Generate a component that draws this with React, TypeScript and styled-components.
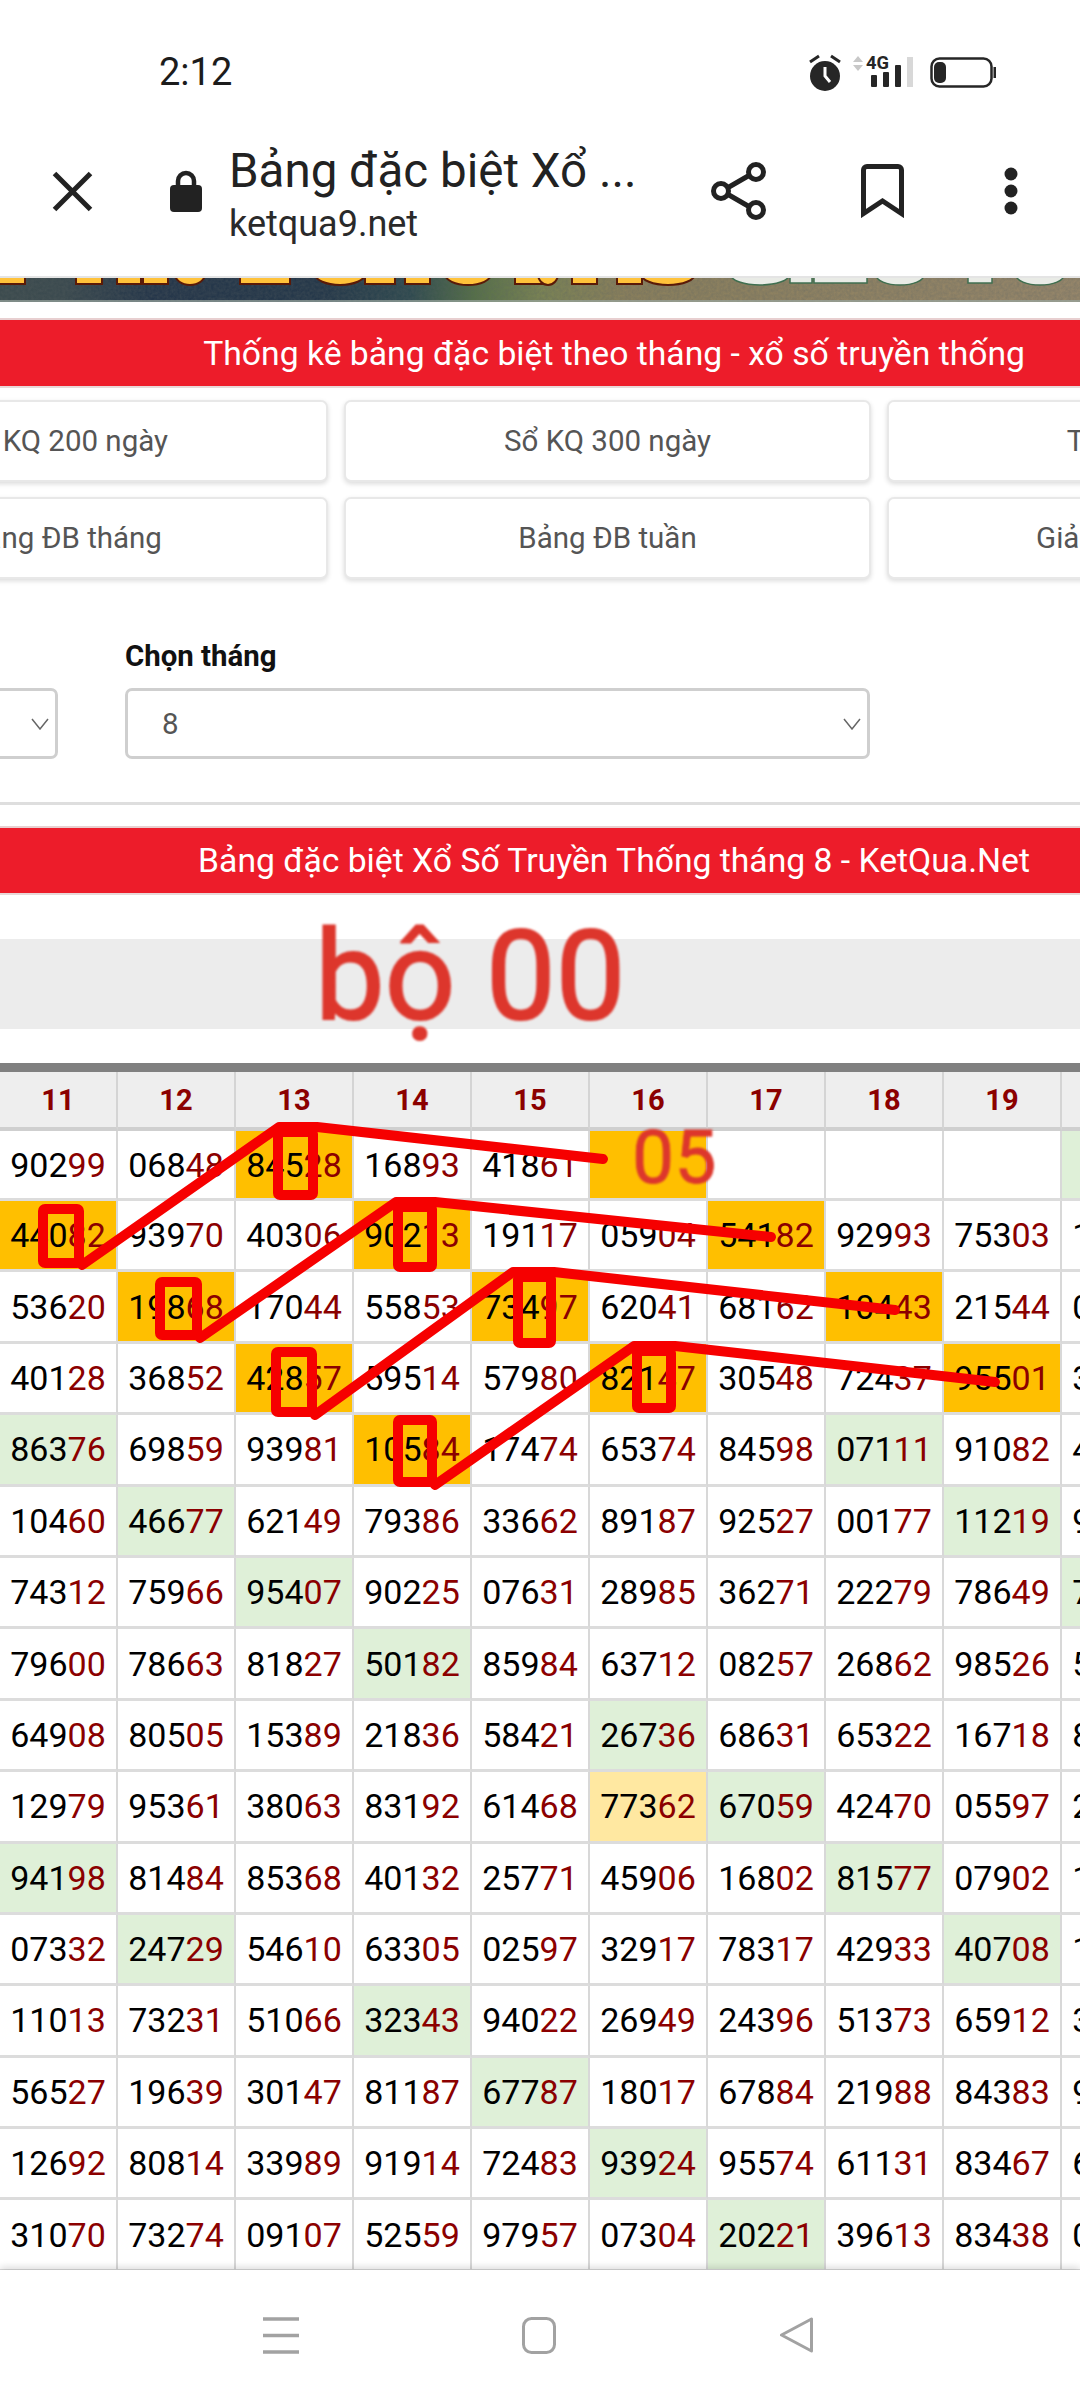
import React from "react";
import styled, { createGlobalStyle } from "styled-components";

const Global = createGlobalStyle`
  html, body { margin: 0; padding: 0; background: #fff; }
  * { box-sizing: border-box; }
`;

const Screen = styled.div`
  position: relative;
  width: 1080px;
  height: 2400px;
  overflow: hidden;
  display: flex;
  flex-direction: column;
  background: #fff;
  font-family: Roboto, "Noto Sans", sans-serif;
`;

const StatusBar = styled.div`
  height: 106px;
  flex: none;
  display: flex;
  justify-content: space-between;
  align-items: flex-start;
  padding: 50px 80px 0 159px;
`;
const Time = styled.div`
  font-size: 38px;
  line-height: 44px;
  color: #1c1c1c;
`;
const Toolbar = styled.div`
  height: 170px;
  flex: none;
  display: flex;
  align-items: center;
  padding-left: 52px;
`;
const IconSlot = styled.div<{ $left: number }>`
  display: flex;
  flex: none;
  margin-left: ${(p) => p.$left}px;
`;
const TitleBlock = styled.div`
  width: 440px;
  margin-left: 27px;
  flex: none;
  display: flex;
  flex-direction: column;
  gap: 8px;
  margin-top: 6px;
`;
const PageTitle = styled.div`
  font-size: 47.5px;
  line-height: 52px;
  color: #222;
  white-space: nowrap;
`;
const PageUrl = styled.div`
  font-size: 36px;
  line-height: 38px;
  color: #2a2a2a;
`;
const Main = styled.div`
  flex: 1;
  min-height: 0;
  overflow: hidden;
`;
const BannerStrip = styled.div`
  height: 26px;
  border-top: 2px solid #e4e4e4;
  svg { display: block; }
`;
const RedBar = styled.div<{ $top: number; $height: number; $right: number }>`
  margin-top: ${(p) => p.$top}px;
  height: ${(p) => p.$height}px;
  background: #ed1c2a;
  border-top: 2px solid #e8cfd0;
  border-bottom: 2px solid #e8d8d8;
  display: flex;
  align-items: center;
  justify-content: flex-end;
  padding-right: ${(p) => p.$right}px;
  color: #fff;
  font-size: 33.7px;
  white-space: nowrap;
`;
const ButtonGrid = styled.div`
  margin: 12px 0 0 -199px;
  display: grid;
  grid-template-columns: repeat(3, 527px);
  grid-auto-rows: 82px;
  column-gap: 16px;
  row-gap: 15px;
`;
const LinkButton = styled.div`
  border: 2px solid #e8e8e8;
  border-radius: 7px;
  background: #fff;
  box-shadow: 0 2px 5px rgba(0, 0, 0, 0.14);
  display: flex;
  align-items: center;
  justify-content: center;
  font-size: 29.5px;
  color: #555;
  white-space: nowrap;
`;
const FilterGrid = styled.div`
  margin: 60px 0 0 -687px;
  display: grid;
  grid-template-columns: 745px 745px;
  column-gap: 67px;
`;
const FilterField = styled.div`
  display: flex;
  flex-direction: column;
`;
const FilterLabel = styled.div`
  font-size: 29.4px;
  font-weight: 700;
  line-height: 34px;
  height: 34px;
  margin-bottom: 15px;
  color: #111;
`;
const SelectBox = styled.div`
  height: 71px;
  border: 3px solid #cfcfcf;
  border-radius: 7px;
  display: flex;
  align-items: center;
  justify-content: space-between;
  padding: 0 6px 0 34px;
  font-size: 29.5px;
  color: #555;
`;
const Divider = styled.div`
  margin-top: 43px;
  height: 3px;
  background: #dedede;
`;
const GreyBand = styled.div`
  margin-top: 44px;
  height: 90px;
  background: #ececec;
`;
const Table = styled.div`
  margin: 34px 0 0 0;
  width: 1180px;
  border-top: 9px solid #808080;
`;
const Row = styled.div<{ $height: number }>`
  display: grid;
  grid-template-columns: repeat(10, 118px);
  height: ${(p) => p.$height}px;
`;
const HeadCell = styled.div`
  background: #eee;
  border-right: 2px solid #d4d4d4;
  border-bottom: 4px solid #cfcfcf;
  display: flex;
  align-items: center;
  justify-content: center;
  color: #8b0000;
  font-size: 29px;
  font-weight: 700;
`;
const cellBg: Record<string, string> = { o: "#ffbf00", g: "#dff0d8", y: "#ffe8a1", "": "#fff" };
const Cell = styled.div<{ $tone: string }>`
  background: ${(p) => cellBg[p.$tone]};
  border-right: 2px solid #d8d8d8;
  border-bottom: 3px solid #dcdcdc;
  display: flex;
  align-items: center;
  justify-content: center;
  font-size: 34px;
  color: #000;
`;
const Tail = styled.span`
  color: #8b0000;
`;
const Annotations = styled.svg`
  position: absolute;
  left: 0;
  top: 0;
  pointer-events: none;
`;
const HandText = styled.div<{ $x: number; $y: number; $size: number; $stroke: number }>`
  position: absolute;
  left: ${(p) => p.$x}px;
  top: ${(p) => p.$y}px;
  font-size: ${(p) => p.$size}px;
  line-height: 1;
  color: #dd362c;
  -webkit-text-stroke: ${(p) => p.$stroke}px #dd362c;
  filter: blur(0.8px);
  white-space: nowrap;
`;
const BottomNav = styled.div`
  position: relative;
  height: 130px;
  flex: none;
  background: #fff;
  box-shadow: 0 -3px 7px rgba(0, 0, 0, 0.14);
  display: flex;
  align-items: center;
  padding-left: 263px;
  gap: 223px;
`;

const raw = `90299 06848 84528:o 16893 41861 :o : : : :g
44082:o 93970 40306 90213:o 19117 05904 54182:o 92993 75303 10525
53620 19868:o 17044 55853 73497:o 62041 68162 10443:o 21544 03318
40128 36852 42857:o 59514 57980 82147:o 30548 72437 95501:o 38214
86376:g 69859 93981 10584:o 17474 65374 84598 07111:g 91082 49120
10460 46677:g 62149 79386 33662 89187 92527 00177 11219:g 95240
74312 75966 95407:g 90225 07631 28985 36271 22279 78649 70312:g
79600 78663 81827 50182:g 85984 63712 08257 26862 98526 54216
64908 80505 15389 21836 58421 26736:g 68631 65322 16718 80451
12979 95361 38063 83192 61468 77362:y 67059:g 42470 05597 25173
94198:g 81484 85368 40132 25771 45906 16802 81577:g 07902 16340
07332 24729:g 54610 63305 02597 32917 78317 42933 40708:g 12986
11013 73231 51066 32343:g 94022 26949 24396 51373 65912 30745
56527 19639 30147 81187 67787:g 18017 67884 21988 84383 92861
12692 80814 33989 91914 72483 93924:g 95574 61131 83467 60528
31070 73274 09107 52559 97957 07304 20221:g 39613 83438 04692`;
const rows = raw.split("\n").map((line) =>
  line.split(" ").map((c) => {
    const [num, tone = ""] = c.split(":");
    return { num, tone };
  })
);
const days = ["11", "12", "13", "14", "15", "16", "17", "18", "19", "20"];

const buttons = [
  "Sổ KQ 200 ngày",
  "Sổ KQ 300 ngày",
  "Tìm kiếm KQ",
  "Bảng ĐB tháng",
  "Bảng ĐB tuần",
  "Giải đặc biệt năm",
];

const StatusIcons = () => (
  <svg width="195" height="45" viewBox="805 50 195 45">
    <circle cx="825" cy="76" r="15" fill="#262626" />
    <path d="M825 67v9l5 6" stroke="#fff" strokeWidth="3" fill="none" />
    <path d="M810 62l9-6M840 62l-9-6" stroke="#262626" strokeWidth="3" fill="none" />
    <path d="M858 56l5 6h-10zM858 71l5-6h-10z" fill="#c8c8c8" />
    <text x="866" y="69" fontFamily="Roboto, sans-serif" fontWeight="700" fontSize="19" fill="#262626" textLength="23" lengthAdjust="spacingAndGlyphs">4G</text>
    <rect x="871" y="75" width="6" height="12" rx="1" fill="#262626" />
    <rect x="883" y="72" width="6" height="15" rx="1" fill="#262626" />
    <rect x="895" y="65" width="6" height="22" rx="1" fill="#262626" />
    <rect x="907" y="57" width="6" height="30" fill="#d8d8d8" />
    <rect x="931.5" y="58.5" width="60" height="28" rx="8" fill="none" stroke="#262626" strokeWidth="2.5" />
    <rect x="934" y="62" width="12" height="21" rx="5" fill="#262626" />
    <rect x="993.5" y="67" width="2.5" height="11" fill="#262626" />
  </svg>
);

const BannerArt = () => (
  <svg width="1080" height="24" viewBox="0 0 1080 24">
    <defs>
      <linearGradient id="bg" x1="0" x2="1" y1="0" y2="0">
        <stop offset="0" stopColor="#3c4b4e" />
        <stop offset="0.06" stopColor="#3b4a4f" />
        <stop offset="0.14" stopColor="#25364a" />
        <stop offset="0.3" stopColor="#25384a" />
        <stop offset="0.38" stopColor="#2f4a50" />
        <stop offset="0.44" stopColor="#567048" />
        <stop offset="0.5" stopColor="#7a8354" />
        <stop offset="0.58" stopColor="#8a7f5c" />
        <stop offset="1" stopColor="#96866a" />
      </linearGradient>
      <filter id="grain" x="0" y="0" width="100%" height="100%">
        <feTurbulence type="fractalNoise" baseFrequency="0.35" numOctaves="2" seed="4" />
        <feColorMatrix values="0 0 0 0 0.1  0 0 0 0 0.12  0 0 0 0 0.12  0.9 0 0 0 -0.2" />
      </filter>
    </defs>
    <rect width="1080" height="24" fill="url(#bg)" />
    <rect width="1080" height="24" filter="url(#grain)" opacity="0.55" />
    <rect y="22" width="1080" height="2" fill="#9aa6a0" opacity="0.7" />
    <g fill="#ffc23a" stroke="#5a1a08" strokeWidth="2">
      {[[-2, 27], [76, 26], [117, 24], [143, 25], [240, 50], [365, 30], [405, 25], [515, 30], [572, 25], [617, 25]].map(([x, w]) => (
        <rect key={x} x={x} y={-4} width={w} height={10} />
      ))}
      {[[190, 15], [340, 25], [468, 23], [668, 27], [548, 10]].map(([c, r]) => (
        <ellipse key={c} cx={c} cy={-4} rx={r} ry={11} />
      ))}
    </g>
    <g fill="#e9ebe6" stroke="#3f6f50" strokeWidth="1.500">
      {[[790, 22], [814, 53], [968, 24]].map(([x, w]) => (
        <rect key={x} x={x} y={-4} width={w} height={9} />
      ))}
      {[[760, 29], [900, 24], [1040, 24]].map(([c, r]) => (
        <ellipse key={c} cx={c} cy={-3} rx={r} ry={10} />
      ))}
    </g>
  </svg>
);

const Chevron = () => (
  <svg width="18" height="12" viewBox="0 0 18 12">
    <path d="M1 1l8 10 8-10" stroke="#666" strokeWidth="1.500" fill="none" />
  </svg>
);

export default function App() {
  return (
    <Screen>
      <Global />
      <StatusBar>
        <Time>2:12</Time>
        <StatusIcons />
      </StatusBar>
      <Toolbar>
        <IconSlot $left={0}>
          <svg width="41" height="41" viewBox="0 0 41 41">
            <path d="M2.5 2.5l36 36M38.5 2.5l-36 36" stroke="#222" strokeWidth="5" fill="none" />
          </svg>
        </IconSlot>
        <IconSlot $left={77}>
          <svg width="32" height="42" viewBox="0 0 32 42">
            <path d="M8 17v-6a8 8 0 0 1 16 0v6" stroke="#222" strokeWidth="4.5" fill="none" />
            <rect y="15" width="32" height="27" rx="4" fill="#222" />
          </svg>
        </IconSlot>
        <TitleBlock>
          <PageTitle>Bảng đặc biệt Xổ ...</PageTitle>
          <PageUrl>ketqua9.net</PageUrl>
        </TitleBlock>
        <IconSlot $left={42}>
          <svg width="55" height="60" viewBox="0 0 55 60">
            <path d="M44 11L11 30l33 19" stroke="#222" strokeWidth="5" fill="none" />
            <circle cx="45" cy="11" r="7.5" fill="#fff" stroke="#222" strokeWidth="5" />
            <circle cx="10" cy="30" r="7.5" fill="#fff" stroke="#222" strokeWidth="5" />
            <circle cx="45" cy="49" r="7.5" fill="#fff" stroke="#222" strokeWidth="5" />
          </svg>
        </IconSlot>
        <IconSlot $left={95}>
          <svg width="43" height="54" viewBox="0 0 43 54">
            <path d="M2.5 49.5V6a3.5 3.5 0 0 1 3.5-3.5h31A3.5 3.5 0 0 1 40.5 6v43.5L21.500 37z" stroke="#222" strokeWidth="5" fill="none" />
          </svg>
        </IconSlot>
        <IconSlot $left={100}>
          <svg width="14" height="48" viewBox="0 0 14 48">
            <circle cx="7" cy="7" r="6.500" fill="#222" />
            <circle cx="7" cy="24" r="6.500" fill="#222" />
            <circle cx="7" cy="41" r="6.500" fill="#222" />
          </svg>
        </IconSlot>
      </Toolbar>
      <Main>
        <BannerStrip>
          <BannerArt />
        </BannerStrip>
        <RedBar $top={16} $height={70} $right={55}>
          Thống kê bảng đặc biệt theo tháng - xổ số truyền thống
        </RedBar>
        <ButtonGrid>
          {buttons.map((b) => (
            <LinkButton key={b}>{b}</LinkButton>
          ))}
        </ButtonGrid>
        <FilterGrid>
          <FilterField>
            <FilterLabel>Chọn năm</FilterLabel>
            <SelectBox>
              2021
              <Chevron />
            </SelectBox>
          </FilterField>
          <FilterField>
            <FilterLabel>Chọn tháng</FilterLabel>
            <SelectBox>
              8
              <Chevron />
            </SelectBox>
          </FilterField>
        </FilterGrid>
        <Divider />
        <RedBar $top={21} $height={69} $right={50}>
          Bảng đặc biệt Xổ Số Truyền Thống tháng 8 - KetQua.Net
        </RedBar>
        <GreyBand />
        <Table>
          <Row $height={59}>
            {days.map((d) => (
              <HeadCell key={d}>{d}</HeadCell>
            ))}
          </Row>
          {rows.map((r, i) => (
            <Row key={i} $height={i === 0 ? 70 : 71.4}>
              {r.map((c, j) => (
                <Cell key={j} $tone={c.tone}>
                  {c.num.slice(0, 3)}
                  <Tail>{c.num.slice(3)}</Tail>
                </Cell>
              ))}
            </Row>
          ))}
        </Table>
      </Main>
      <Annotations width="1080" height="2270" viewBox="0 0 1080 2270">
        <g fill="none" stroke="#f60000" strokeWidth="10" strokeLinejoin="round" strokeLinecap="round">
          <rect x="43" y="1209" width="36" height="54" rx="2" />
          <rect x="278" y="1132" width="35" height="63" rx="2" />
          <path d="M82 1265L279 1127H317L603 1159" />
          <rect x="160" y="1282" width="37" height="53" rx="2" />
          <rect x="398" y="1207" width="34" height="60" rx="2" />
          <path d="M200 1338L396 1202H435L771 1237" />
          <rect x="276" y="1352" width="36" height="60" rx="2" />
          <rect x="518" y="1277" width="33" height="66" rx="2" />
          <path d="M315 1415L513 1272H554L895 1310" />
          <rect x="398" y="1420" width="34" height="62" rx="2" />
          <rect x="637" y="1351" width="34" height="57" rx="2" />
          <path d="M435 1485L634 1346H675L995 1382" />
        </g>
      </Annotations>
      <HandText $x={315} $y={915} $size={124} $stroke={2}>bộ 00</HandText>
      <HandText $x={632} $y={1120} $size={75} $stroke={0.8}>05</HandText>
      <BottomNav>
        <svg width="36" height="37" viewBox="0 0 36 37">
          <path d="M0 2h36M0 18.500h36M0 35h36" stroke="#a2a2a2" strokeWidth="3.500" />
        </svg>
        <svg width="34" height="37" viewBox="0 0 34 37">
          <rect x="1.500" y="1.500" width="31" height="34" rx="8" fill="none" stroke="#a2a2a2" strokeWidth="3" />
        </svg>
        <svg width="35" height="36" viewBox="0 0 35 36">
          <path d="M32.500 2v32L2.500 18z" fill="none" stroke="#a2a2a2" strokeWidth="3" strokeLinejoin="round" />
        </svg>
      </BottomNav>
    </Screen>
  );
}
